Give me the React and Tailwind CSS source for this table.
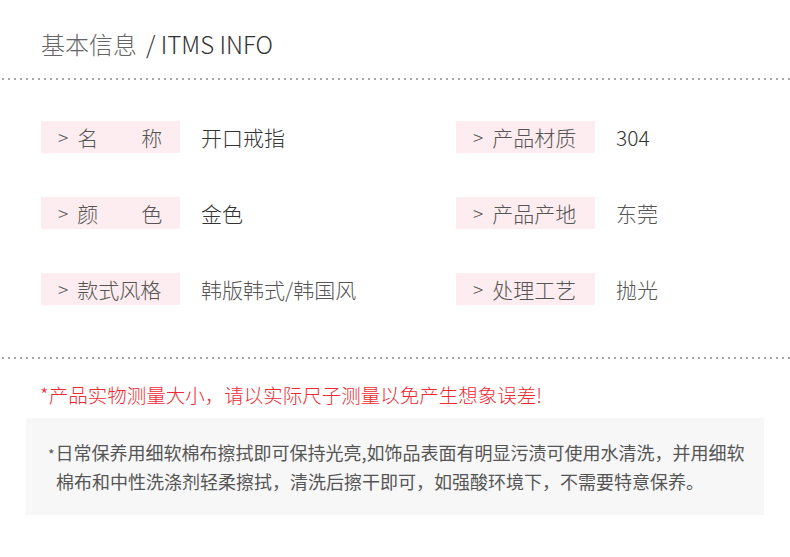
const font = { fontFamily: '"Noto Sans CJK SC", "Noto Sans", sans-serif' };

const rows = [
  [
    { label: ['名', '称'], value: '开口戒指', tone: 'text-[#333]' },
    { label: ['产品材质'], value: '304', tone: 'text-[#333]' },
  ],
  [
    { label: ['颜', '色'], value: '金色', tone: 'text-[#333]' },
    { label: ['产品产地'], value: '东莞', tone: 'text-[#555]' },
  ],
  [
    { label: ['款式风格'], value: '韩版韩式/韩国风', tone: 'text-[#555]' },
    { label: ['处理工艺'], value: '抛光', tone: 'text-[#555]' },
  ],
];

function Dots() {
  return (
    <div className="h-[2px] w-full bg-[linear-gradient(to_right,#a8a8a8_2px,transparent_2px)] bg-[length:6px_2px] bg-[position:2px_0]" />
  );
}

function Item({ item }) {
  return (
    <div className="flex w-[415px] shrink-0 items-center">
      <div className="flex h-[32px] w-[139px] shrink-0 items-center bg-[#fdedf0] pl-[17px] text-[21px] font-light leading-[32px] text-[#555]">
        <span className="mr-[9px] text-[19px]">&gt;</span>
        {item.label.length === 2 ? (
          <span className="flex w-[85px] justify-between">
            <span>{item.label[0]}</span>
            <span>{item.label[1]}</span>
          </span>
        ) : (
          <span>{item.label[0]}</span>
        )}
      </div>
      <div className={`ml-[21px] whitespace-nowrap text-[21px] font-light leading-[32px] ${item.tone}`}>{item.value}</div>
    </div>
  );
}

export default function App() {
  return (
    <div className="h-[557px] w-[790px] overflow-hidden bg-white" style={font}>
      {/* Header */}
      <div className="h-[78px] pl-[41px] pt-[27px] text-[24px] font-light leading-[34px]">
        <span className="text-[#666]">基本信息</span>
        <span className="ml-[9px] text-[#333]">/ ITMS INFO</span>
      </div>
      <Dots />

      {/* Info grid */}
      <div className="mt-[41px] flex flex-col gap-[44px] pl-[41px]">
        {rows.map((row, i) => (
          <div key={i} className="flex">
            {row.map((item, j) => (
              <Item key={j} item={item} />
            ))}
          </div>
        ))}
      </div>

      <div className="mt-[52px]">
        <Dots />
      </div>

      {/* Notice */}
      <div className="mt-[22px] pl-[40px] text-[19.5px] font-light leading-[28px] text-[#ef2a33]">
        *产品实物测量大小，请以实际尺子测量以免产生想象误差!
      </div>

      <div className="ml-[26px] mt-[9px] h-[97px] w-[738px] whitespace-nowrap bg-[#f7f7f7] pt-[21px] text-[18px] leading-[27px] text-[#555]">
        <div className="pl-[22px]">
          <span className="mr-[1px] text-[14px]">*</span>日常保养用细软棉布擦拭即可保持光亮,如饰品表面有明显污渍可使用水清洗，并用细软
        </div>
        <div className="pl-[30px]">
          棉布和中性洗涤剂轻柔擦拭，清洗后擦干即可，如强酸环境下，不需要特意保养。
        </div>
      </div>
    </div>
  );
}
